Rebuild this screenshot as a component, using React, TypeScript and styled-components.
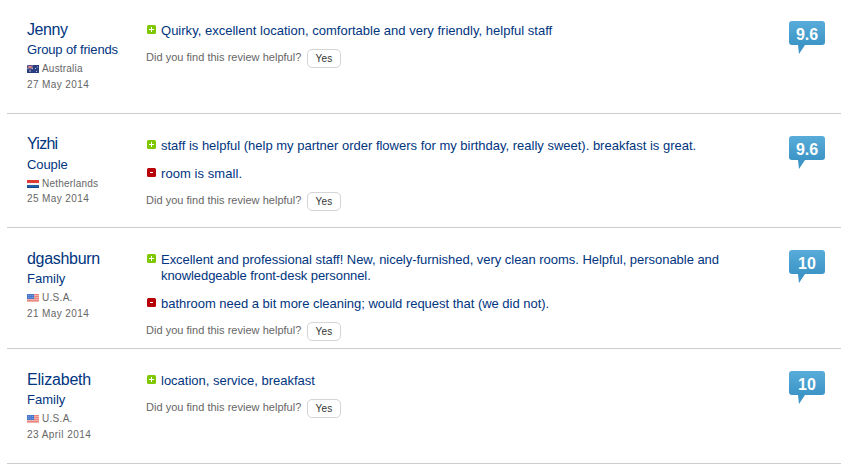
import React from "react";
import styled, { createGlobalStyle } from "styled-components";

const GlobalStyle = createGlobalStyle`
  body {
    margin: 0;
    background: #fff;
    font-family: "Liberation Sans", Arial, sans-serif;
  }
`;

const List = styled.ul`
  margin: 0;
  padding: 0 7px;
  width: 834px;
  list-style: none;
`;

const Row = styled.li<{ $height: number; $first?: boolean }>`
  box-sizing: border-box;
  display: grid;
  grid-template-columns: 119px 643px 36px;
  height: ${(p) => p.$height}px;
  padding: ${(p) => (p.$first ? 21 : 22)}px 16px 0 20px;
  border-bottom: 1px solid #ccc;
  white-space: nowrap;
`;

const Tracked = styled.span<{ $ls?: number }>`
  letter-spacing: ${(p) => p.$ls ?? 0}px;
`;

const Author = styled.div`
  display: flex;
  flex-direction: column;
  color: #003580;
`;

const Name = styled.div<{ $raised?: boolean }>`
  margin: ${(p) => (p.$raised ? "-1px 0 1px" : "0")};
  font-size: 16px;
  line-height: 18px;
`;

const Kind = styled.div`
  margin-top: 2px;
  font-size: 13px;
  line-height: 18px;
`;

const Origin = styled.div`
  display: flex;
  align-items: center;
  gap: 3px;
  height: 16px;
  margin-top: 2px;
  color: #666;
  font-size: 10px;
  line-height: 16px;

  svg {
    display: block;
    margin-top: -1px;
  }
`;

const DateLine = styled.div<{ $raised?: boolean }>`
  margin-top: ${(p) => (p.$raised ? -1 : 0)}px;
  color: #666;
  font-size: 10px;
  line-height: 16px;

  span {
    display: block;
  }
`;

const Body = styled.div`
  padding-top: 2px;
`;

const Comment = styled.div`
  display: grid;
  grid-template-columns: 10px auto;
  column-gap: 5px;
  color: #003580;
  font-size: 13px;
  line-height: 16px;

  & + & {
    margin-top: 12px;
  }

  svg {
    display: block;
    margin: 2px 0 0 1px;
  }
`;

const Line = styled.div<{ $ls: number }>`
  letter-spacing: ${(p) => p.$ls}px;
`;

const Helpful = styled.div`
  display: flex;
  align-items: center;
  gap: 6px;
  margin-top: 9px;
  height: 20px;
  color: #666;
  font-size: 11px;
`;

const Question = styled.span`
  width: 155px;
  margin-top: -3px;
  letter-spacing: 0.02px;
`;

const YesButton = styled.button`
  box-sizing: border-box;
  width: 34px;
  height: 19px;
  padding: 1px 0 0;
  border: 1px solid #d5d5d5;
  border-radius: 5px;
  background: #fff;
  color: #333;
  font: 10px/16px "Liberation Sans", Arial, sans-serif;
  letter-spacing: 0.2px;
`;

const Score = styled.div`
  position: relative;
  width: 36px;
  height: 24px;
  border-radius: 3px;
  background: linear-gradient(#58acd9, #3c95c6);
  color: #fff;
  font-size: 16px;
  font-weight: bold;
  line-height: 28px;
  text-align: center;
`;

const Tail = styled.svg`
  position: absolute;
  left: 9px;
  top: 24px;
`;

type Country = "Australia" | "Netherlands" | "U.S.A.";

function Flag({ country }: { country: Country }) {
  return (
    <svg width="12" height="8" viewBox="0 0 12 8">
      {country === "Australia" && (
        <>
          <rect width="12" height="8" fill="#2b3f83" />
          <path d="M0 0L6 4M6 0L0 4" stroke="#c9c3dc" strokeWidth="1" />
          <path d="M3 0V4.500M0 2.200H6" stroke="#df7372" strokeWidth="1" />
          <path d="M2 6H4M8 3.500H9M10 2H11M9 6.500H10" stroke="#b5bddc" strokeWidth="1" />
          <rect x=".5" y=".5" width="11" height="7" fill="none" stroke="#24356f" strokeOpacity=".4" />
        </>
      )}
      {country === "Netherlands" && (
        <>
          <rect width="12" height="3" fill="#df3b35" />
          <rect y="3" width="12" height="2" fill="#f4f4f4" />
          <rect y="5" width="12" height="3" fill="#2260a5" />
          <rect y="7" width="12" height="1" fill="#174786" />
        </>
      )}
      {country === "U.S.A." && (
        <>
          <rect width="12" height="8" fill="#f4b4ae" />
          <path d="M0 .5H12M0 2.500H12M0 4.500H12M0 6.500H12" stroke="#e8837d" />
          <rect width="7" height="5" fill="#4a78cb" />
          <path d="M1 1.500H6M1 3.500H6" stroke="#759ce0" strokeDasharray="1 1" />
        </>
      )}
    </svg>
  );
}

function Mark({ good }: { good: boolean }) {
  return (
    <svg width="9" height="9" viewBox="0 0 9 9">
      <rect width="9" height="9" rx="1.500" fill={good ? "#7fc800" : "#b80008"} />
      <path d={good ? "M2 4.500H7M4.500 2V7" : "M3 4.500H6"} stroke="#fff" />
    </svg>
  );
}

type Run = [text: string, spacing: number];

interface Review {
  name: Run;
  kind: Run;
  country: Country;
  countrySpacing: number;
  date: Run;
  good: Run[];
  bad?: Run[];
  score: string;
  height: number;
  raised?: boolean;
}

const reviews: Review[] = [
  {
    name: ["Jenny", -0.4],
    kind: ["Group of friends", -0.14],
    country: "Australia",
    countrySpacing: 0.2,
    date: ["27 May 2014", 0.4],
    good: [["Quirky, excellent location, comfortable and very friendly, helpful staff", 0.014]],
    score: "9.6",
    height: 114,
  },
  {
    name: ["Yizhi", -0.75],
    kind: ["Couple", -0.1],
    country: "Netherlands",
    countrySpacing: 0.2,
    date: ["25 May 2014", 0.4],
    good: [["staff is helpful (help my partner order flowers for my birthday, really sweet). breakfast is great.", -0.005]],
    bad: [["room is small.", 0.07]],
    score: "9.6",
    height: 114,
    raised: true,
  },
  {
    name: ["dgashburn", -0.3],
    kind: ["Family", 0],
    country: "U.S.A.",
    countrySpacing: 0.3,
    date: ["21 May 2014", 0.4],
    good: [
      ["Excellent and professional staff! New, nicely-furnished, very clean rooms. Helpful, personable and", -0.033],
      ["knowledgeable front-desk personnel.", -0.08],
    ],
    bad: [["bathroom need a bit more cleaning; would request that (we did not).", -0.02]],
    score: "10",
    height: 121,
  },
  {
    name: ["Elizabeth", -0.2],
    kind: ["Family", 0],
    country: "U.S.A.",
    countrySpacing: 0.3,
    date: ["23 April 2014", 0.45],
    good: [["location, service, breakfast", 0]],
    score: "10",
    height: 115,
  },
];

function Remarks({ lines, good }: { lines: Run[]; good: boolean }) {
  return (
    <Comment>
      <Mark good={good} />
      <div>
        {lines.map(([text, ls]) => (
          <Line key={text} $ls={ls}>{text}</Line>
        ))}
      </div>
    </Comment>
  );
}

export default function App() {
  return (
    <>
      <GlobalStyle />
      <List>
        {reviews.map((r, i) => (
          <Row key={r.name[0]} $height={r.height} $first={i === 0}>
            <Author>
              <Name $raised={r.raised}><Tracked $ls={r.name[1]}>{r.name[0]}</Tracked></Name>
              <Kind><Tracked $ls={r.kind[1]}>{r.kind[0]}</Tracked></Kind>
              <Origin>
                <Flag country={r.country} />
                <Tracked $ls={r.countrySpacing}>{r.country}</Tracked>
              </Origin>
              <DateLine $raised={r.raised}><Tracked $ls={r.date[1]}>{r.date[0]}</Tracked></DateLine>
            </Author>
            <Body>
              <Remarks lines={r.good} good />
              {r.bad && <Remarks lines={r.bad} good={false} />}
              <Helpful>
                <Question>Did you find this review helpful?</Question>
                <YesButton>Yes</YesButton>
              </Helpful>
            </Body>
            <Score>
              {r.score}
              <Tail width="9" height="9" viewBox="0 0 9 9">
                <path d="M0 0H7L1 9Z" fill="#3c95c6" />
              </Tail>
            </Score>
          </Row>
        ))}
      </List>
    </>
  );
}
